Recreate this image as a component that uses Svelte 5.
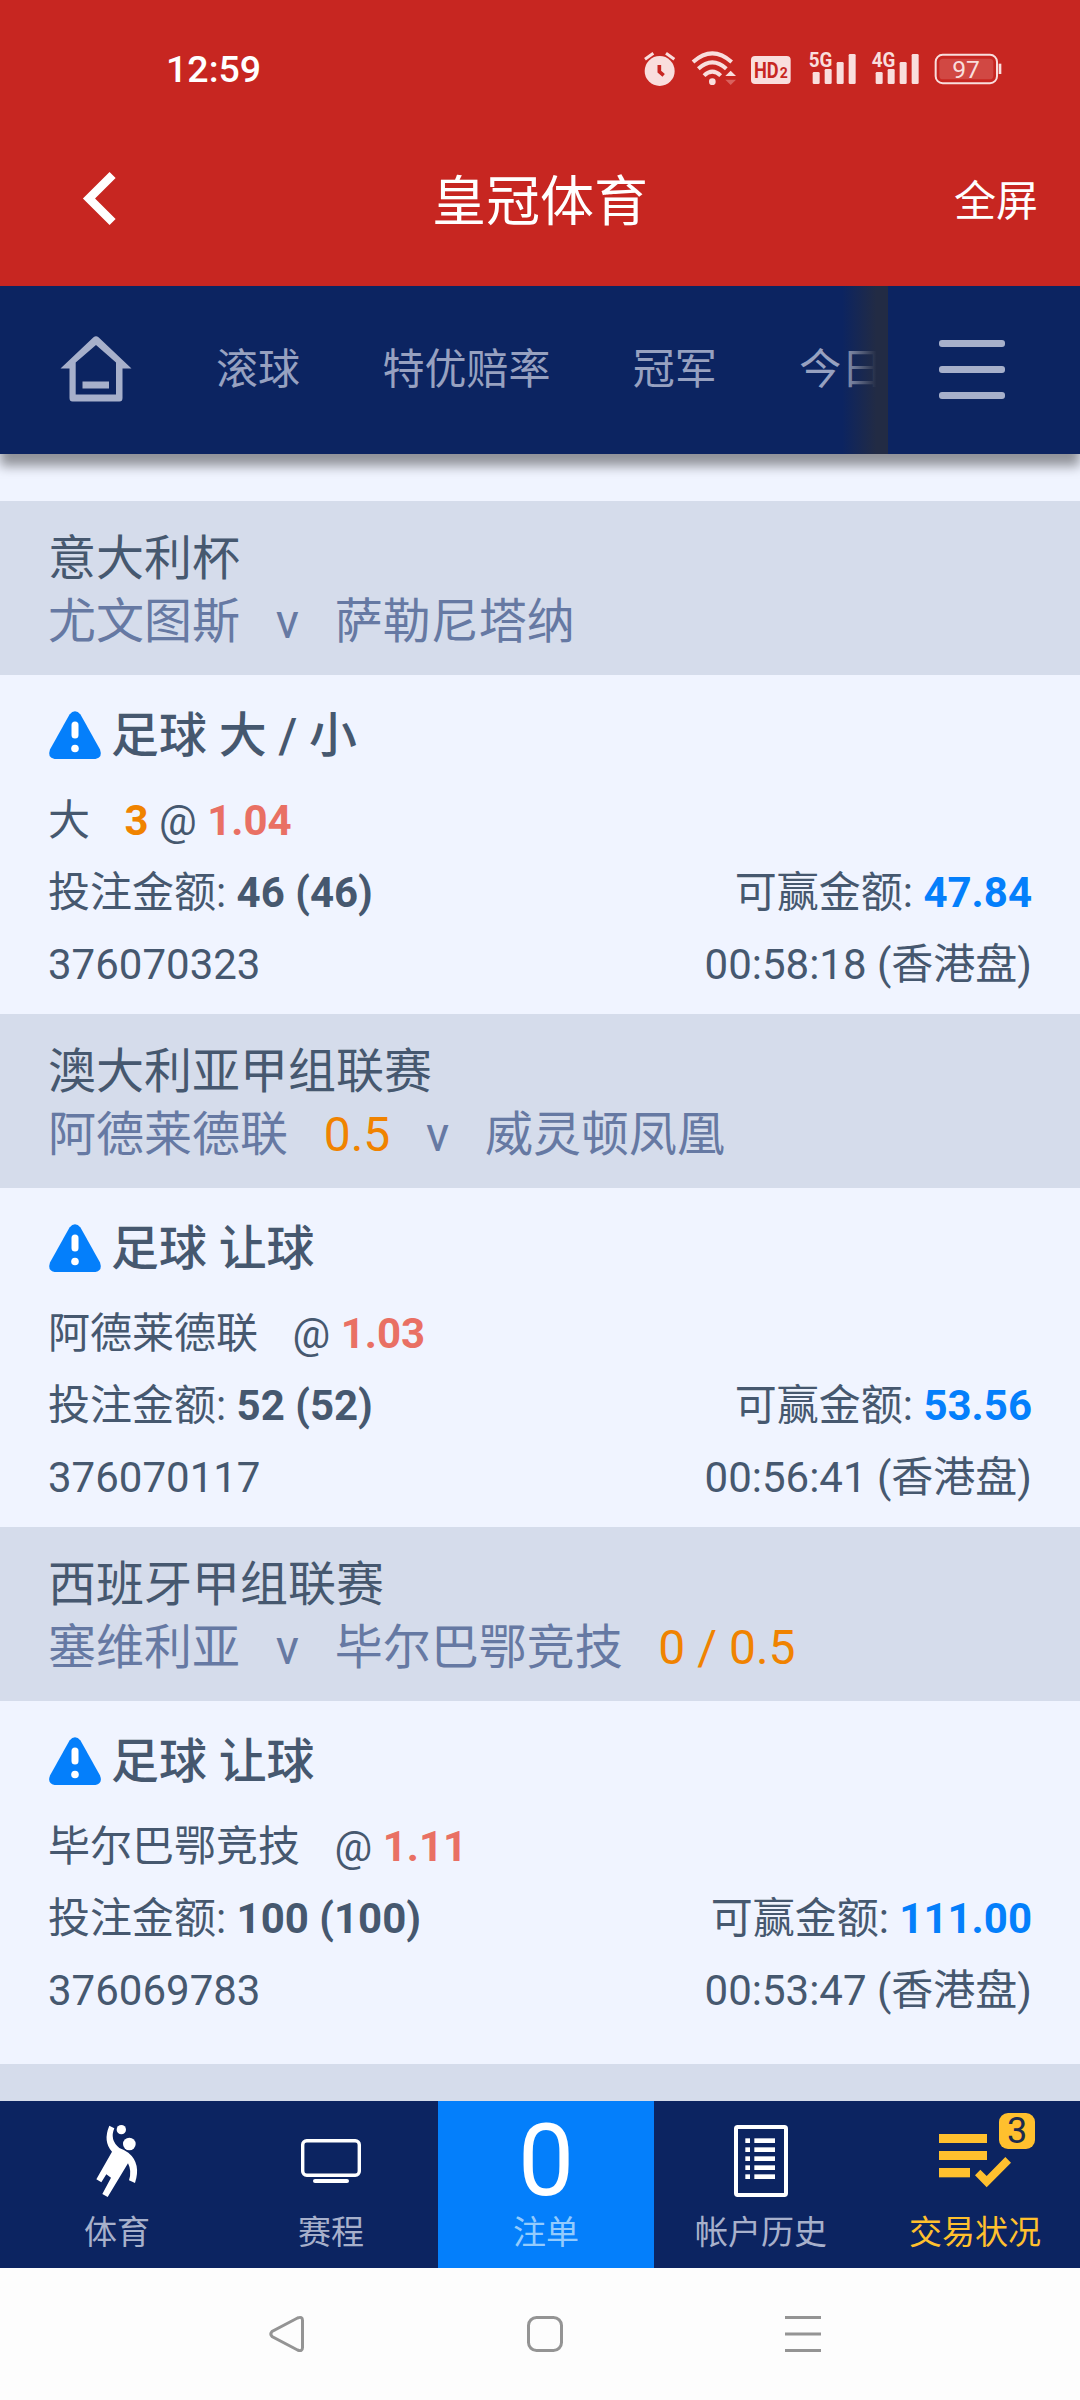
<script>
  const tabs = ["滚球", "特优赔率", "冠军", "今日"];

  const bets = [
    {
      league: "意大利杯",
      home: "尤文图斯",
      away: "萨勒尼塔纳",
      type: "足球 大 / 小",
      pick: "大",
      line: "3",
      odds: "1.04",
      stake: "46 (46)",
      win: "47.84",
      id: "376070323",
      time: "00:58:18",
    },
    {
      league: "澳大利亚甲组联赛",
      home: "阿德莱德联",
      homeLine: "0.5",
      away: "威灵顿凤凰",
      type: "足球 让球",
      pick: "阿德莱德联",
      odds: "1.03",
      stake: "52 (52)",
      win: "53.56",
      id: "376070117",
      time: "00:56:41",
    },
    {
      league: "西班牙甲组联赛",
      home: "塞维利亚",
      away: "毕尔巴鄂竞技",
      awayLine: "0 / 0.5",
      type: "足球 让球",
      pick: "毕尔巴鄂竞技",
      odds: "1.11",
      stake: "100 (100)",
      win: "111.00",
      id: "376069783",
      time: "00:53:47",
    },
  ];

  const listRows = [265, 292, 319, 346, 373];
</script>

<div class="screen">
  <header class="top">
    <div class="status">
      <span class="clock">12:59</span>
      <div class="status-icons">
        <!-- alarm -->
        <svg width="48" height="37" viewBox="73 60 144 111">
          <circle cx="120" cy="123" r="45" fill="#f9dedd" />
          <path d="M76 88 L101 70 M164 88 L139 70" stroke="#f9dedd" stroke-width="9" />
          <path d="M119 105 V125 L132 136" fill="none" stroke="#c72621" stroke-width="11" />
        </svg>
        <!-- wifi -->
        <svg width="59" height="37" viewBox="217 60 177 111">
          <g fill="none" stroke="#f9dedd" stroke-width="12">
            <path d="M220 96 Q278 44 336 96" />
            <path d="M236 116 Q278 78 320 116" />
            <path d="M253 137 Q278 113 303 137" />
          </g>
          <circle cx="278" cy="155" r="10" fill="#f9dedd" />
          <path d="M317 138 L333 122 L349 138 Z" fill="#f9dedd" />
          <path d="M317 149 L333 165 L349 149 Z" fill="#d9625e" />
        </svg>
        <!-- hd -->
        <svg width="58" height="37" viewBox="394 60 174 111">
          <rect x="394" y="78" width="119" height="84" rx="12" fill="#f9dedd" />
          <text x="403" y="143" class="hd">
            <tspan textLength="74" lengthAdjust="spacingAndGlyphs">HD</tspan><tspan class="small" x="480">2</tspan>
          </text>
        </svg>
        {#each ["5G", "4G"] as net}
          <svg width="63" height="37" viewBox="568 60 189 111" fill="#f9dedd">
            <text x="567" y="111" class="net" textLength="71" lengthAdjust="spacingAndGlyphs">{net}</text>
            <rect x="579" y="126" width="21" height="36" rx="4" />
            <rect x="615" y="117" width="21" height="45" rx="4" />
            <rect x="651" y="96" width="21" height="66" rx="4" />
            <rect x="687" y="72" width="21" height="90" rx="4" />
          </svg>
        {/each}
        <!-- battery -->
        <svg width="68" height="37" viewBox="946 60 204 111">
          <rect x="948" y="74.5" width="184" height="85" rx="21" fill="none" stroke="#f9dedd" stroke-width="6" />
          <rect x="959" y="86" width="162" height="62" rx="11" fill="#d14843" />
          <path d="M1141 101 V132" stroke="#f9dedd" stroke-width="8" />
          <text x="1039" y="144" class="level" text-anchor="middle">97</text>
        </svg>
      </div>
    </div>
    <div class="title-bar">
      <svg class="back" width="34" height="53" viewBox="0 0 34 53">
        <path d="M29.6 3 L6 26.5 L29.6 50" fill="none" stroke="#fff" stroke-width="8.6" />
      </svg>
      <h1>皇冠体育</h1>
      <span class="full">全屏</span>
    </div>
  </header>

  <nav class="tabs">
    <svg class="home" width="72" height="67" viewBox="0 0 72 67" fill="#a7b0cb">
      <path
        fill-rule="evenodd"
        d="M33.5 1.2 Q36 -.8 38.5 1.2 L71.5 32.5 H62.5 V62 Q62.5 65.5 59.5 65.5 H12.5 Q9.5 65.5 9.5 62 V32.5 H.5 Z M36 9 L15.7 26.5 V58.5 H56 V26.5 Z"
      />
      <rect x="22.5" y="45.5" width="26.5" height="7" />
    </svg>
    <div class="tab-list">
      {#each tabs as tab}
        <span>{tab}</span>
      {/each}
    </div>
    <div class="menu"><i></i><i></i><i></i></div>
  </nav>

  <main>
    {#each bets as bet}
      <section>
        <div class="match">
          <p class="league">{bet.league}</p>
          <p class="teams">
            <span>{bet.home}</span>
            {#if bet.homeLine}<span class="line">{bet.homeLine}</span>{/if}
            <span>v</span>
            <span>{bet.away}</span>
            {#if bet.awayLine}<span class="line">{bet.awayLine}</span>{/if}
          </p>
        </div>
        <div class="bet">
          <div class="type">
            <svg width="52" height="48" viewBox="0 0 52 48">
              <path d="M20.5 3.5 Q26 -3 31.5 3.5 L51 38.5 Q54 46.5 46.5 48 H5.5 Q-2 46.5 1 38.5 Z" fill="#047ffb" />
              <path d="M26 14 V24" stroke="#fff" stroke-width="7" stroke-linecap="round" />
              <circle cx="26" cy="37.5" r="3.8" fill="#fff" />
            </svg>
            <b>{bet.type}</b>
          </div>
          <div class="row">
            <span>
              <span class="pick">{bet.pick}</span>{#if bet.line}<b class="line">{bet.line}</b>{" "}{/if}@
              <b class="odds">{bet.odds}</b>
            </span>
          </div>
          <div class="row">
            <span>投注金额: <b>{bet.stake}</b></span>
            <span>可赢金额: <b class="win">{bet.win}</b></span>
          </div>
          <div class="row">
            <span>{bet.id}</span>
            <span>{bet.time} (香港盘)</span>
          </div>
        </div>
      </section>
    {/each}
    <div class="match"></div>
  </main>

  <nav class="bottom">
    <div class="item">
      <div class="icon">
        <svg width="44" height="74" viewBox="285 222 132 222" fill="#fff">
          <circle cx="364" cy="239" r="14" />
          <circle cx="388" cy="282" r="19" />
          <path
            d="M328 227 L343 235 Q328 270 358 294 Q374 300 385 308 Q424 340 405 399 L387 391 Q396 363 384 340 L323 441 L307 432 L333 383 L319 373 L304 397 L289 388 L336 305 Q308 274 328 227 Z"
          />
        </svg>
      </div>
      <span>体育</span>
    </div>
    <div class="item">
      <div class="icon">
        <svg width="60" height="44" viewBox="0 0 60 44">
          <rect x="1.7" y="1.7" width="56.6" height="34.6" rx="4" fill="none" stroke="#fff" stroke-width="3.4" />
          <rect x="12" y="40" width="36" height="4" rx="2" fill="#fff" />
        </svg>
      </div>
      <span>赛程</span>
    </div>
    <div class="item active">
      <div class="icon count">0</div>
      <span>注单</span>
    </div>
    <div class="item">
      <div class="icon">
        <svg width="54" height="72" viewBox="909 225 162 216" fill="#fff">
          <rect x="915" y="231" width="150" height="204" rx="5" fill="none" stroke="#fff" stroke-width="12" />
          {#each listRows as y}
            <rect x="943" {y} width="14" height="14" />
            <rect x="970" {y} width="62" height="14" />
          {/each}
        </svg>
      </div>
      <span>帐户历史</span>
    </div>
    <div class="item status-item">
      <div class="icon">
        <svg width="72" height="54" viewBox="597 252 216 162" fill="#ffc02e">
          <rect x="597" y="252" width="144" height="27" />
          <rect x="597" y="303" width="144" height="27" />
          <rect x="597" y="354" width="93" height="28" />
          <path d="M705 376 L721 359 L740 378 L796 321 L813 338 L740 412 Z" />
        </svg>
        <em class="badge">3</em>
      </div>
      <span>交易状况</span>
    </div>
  </nav>

  <footer>
    <svg width="36" height="36" viewBox="0 0 36 36">
      <path d="M28.5 2 Q33.5 0 33.5 4.5 V31.5 Q33.5 36 28.5 34 L3 20.5 Q.5 18 3 15.5 Z" />
    </svg>
    <svg width="36" height="36" viewBox="0 0 36 36">
      <rect x="1.5" y="1.5" width="33" height="33" rx="8" />
    </svg>
    <svg width="36" height="36" viewBox="0 0 36 36">
      <path d="M0 1.5 H36 M0 18 H36 M0 34.5 H36" />
    </svg>
  </footer>
</div>

<style>
  :global(body) {
    margin: 0;
  }

  .screen {
    display: flex;
    flex-direction: column;
    width: 1080px;
    height: 2400px;
    overflow: hidden;
    background: #f0f4ff;
    color: #46586f;
    font-family: Roboto, "Noto Sans CJK SC", sans-serif;
  }

  p,
  h1 {
    margin: 0;
    font-weight: 400;
  }

  svg {
    display: block;
    flex: none;
    overflow: visible;
  }

  .top {
    height: 286px;
    flex: none;
    background: #c72621;
    color: #fff;
  }

  .status {
    display: flex;
    justify-content: space-between;
    align-items: center;
    box-sizing: border-box;
    height: 137px;
    padding: 0 77px 0 166px;
  }

  .clock {
    padding-top: 1px;
    font-size: 37.5px;
    font-weight: 500;
  }

  .status-icons {
    display: flex;
  }

  .hd {
    font-size: 68px;
    font-weight: 700;
    fill: #c72621;
  }

  .small {
    font-size: 42px;
  }

  .net {
    font-size: 62px;
    font-weight: 700;
  }

  .level {
    font-size: 74px;
    fill: #f9dedd;
  }

  .title-bar {
    display: grid;
    grid-template-columns: 349px auto 1fr;
    align-items: center;
    height: 126px;
    padding: 0 42px 0 83px;
  }

  .title-bar h1 {
    padding-top: 5px;
    font-size: 54px;
    line-height: 60px;
  }

  .back {
    margin-bottom: 3px;
  }

  .full {
    padding-bottom: 5px;
    font-size: 42px;
    text-align: right;
  }

  .tabs {
    display: flex;
    align-items: center;
    flex: none;
    height: 168px;
    background: #0c2461;
    box-shadow: 0 12px 11px rgba(0, 0, 0, 0.4);
    z-index: 1;
  }

  .home {
    margin: 0 0 2px 60px;
  }

  .tab-list {
    display: flex;
    gap: 82.4px;
    align-items: center;
    position: relative;
    box-sizing: border-box;
    width: 756px;
    height: 168px;
    padding: 0 0 10px 84px;
    overflow: hidden;
    color: #97a1c0;
    font-size: 42px;
    white-space: nowrap;
  }

  /* fades the last tab out towards the menu button */
  .tab-list::after {
    content: "";
    position: absolute;
    top: 0;
    right: 0;
    width: 46px;
    height: 100%;
    background: linear-gradient(to right, rgba(34, 43, 68, 0), #222b44 75%);
  }

  .menu {
    display: flex;
    flex-direction: column;
    gap: 19px;
    margin: 0 0 2px 51px;
  }

  .menu i {
    width: 66px;
    height: 7px;
    border-radius: 3px;
    background: #a7b0cb;
  }

  main {
    flex: 1;
    min-height: 0;
    overflow: hidden;
    padding-top: 47px;
  }

  .match {
    box-sizing: border-box;
    height: 174px;
    padding: 26px 48px 0;
    background: #d5dceb;
    font-size: 48px;
    line-height: 63px;
  }

  .teams {
    display: flex;
    gap: 35.7px;
    color: #6679a3;
  }

  .bet {
    box-sizing: border-box;
    height: 339px;
    padding: 24px 48px 0;
  }

  section:last-of-type .bet {
    height: 363px;
  }

  .type {
    display: flex;
    align-items: center;
    gap: 10px;
    height: 72px;
    margin-bottom: 14px;
    padding-left: 1px;
    font-size: 47.9px;
  }

  .type b {
    padding-bottom: 8px;
    font-weight: 500;
  }

  .row {
    display: flex;
    justify-content: space-between;
    font-size: 42px;
    line-height: 72px;
  }

  .pick {
    margin-right: 34.5px;
  }

  .line {
    color: #f08300;
  }

  .odds {
    color: #e97064;
  }

  .win {
    color: #047ffb;
  }

  .bottom {
    display: flex;
    flex: none;
    height: 167px;
    padding-left: 10px;
    overflow: hidden;
    background: #0c2461;
    color: #a7b0cb;
  }

  .item {
    display: flex;
    flex: none;
    flex-direction: column;
    align-items: center;
    box-sizing: border-box;
    width: 214px;
    padding-top: 23px;
    font-size: 33px;
    line-height: 40px;
  }

  .item > span {
    margin-top: 15px;
  }

  .icon {
    display: flex;
    align-items: center;
    justify-content: center;
    position: relative;
    width: 120px;
    height: 74px;
  }

  .active {
    width: 216px;
    background: #047ffb;
    color: #93cbfd;
  }

  .count {
    color: #fff;
    font-size: 100px;
  }

  .status-item {
    color: #ffc02e;
  }

  .badge {
    position: absolute;
    top: -11px;
    right: 0;
    width: 36px;
    height: 36px;
    border-radius: 9px;
    background: #ffc02e;
    color: #1c2b4d;
    font-size: 36px;
    font-style: normal;
    line-height: 36px;
    text-align: center;
  }

  footer {
    display: flex;
    justify-content: space-between;
    align-items: center;
    flex: none;
    height: 132px;
    padding: 0 259px 0 269px;
    background: #fdfdfd;
  }

  footer svg {
    fill: none;
    stroke: #949494;
    stroke-width: 3;
  }
</style>
